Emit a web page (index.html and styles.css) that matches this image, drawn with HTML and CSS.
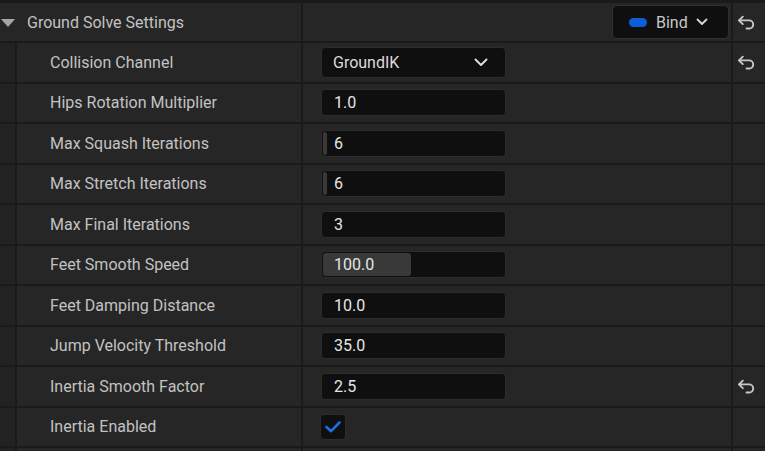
FILE: index.html
```html
<!DOCTYPE html>
<html>
<head>
<meta charset="utf-8">
<link rel="stylesheet" href="styles.css">
</head>
<body>
<div class="panel">
  <div class="row header">
    <div class="hname"><span class="tri"></span><span class="htext">Ground Solve Settings</span></div>
    <div class="value right">
      <div class="bind"><span class="pill"></span><span class="bindtxt">Bind</span>
        <svg class="chev" width="12" height="8" viewBox="0 0 12 8"><path d="M1.5 1.5 L6 6 L10.5 1.5" fill="none" stroke="#d6d6d6" stroke-width="1.8" stroke-linecap="round" stroke-linejoin="round"/></svg>
      </div>
    </div>
    <div class="reset"><svg width="18" height="15" viewBox="0 0 17 14"><path d="M5.5 1.5 L1.8 5 L5.5 8.5 M2 5 H11.5 A3.8 3.8 0 0 1 11.5 12.6 H9" fill="none" stroke="#c8c8c8" stroke-width="1.8" stroke-linecap="round" stroke-linejoin="round"/></svg></div>
  </div>

  <div class="row">
    <div class="gutter"></div>
    <div class="name">Collision Channel</div>
    <div class="value"><div class="combo"><span>GroundIK</span>
      <svg class="chev" width="14" height="9" viewBox="0 0 14 9"><path d="M1.5 1.5 L7 7 L12.5 1.5" fill="none" stroke="#e0e0e0" stroke-width="1.9" stroke-linecap="round" stroke-linejoin="round"/></svg></div></div>
    <div class="reset"><svg width="18" height="15" viewBox="0 0 17 14"><path d="M5.5 1.5 L1.8 5 L5.5 8.5 M2 5 H11.5 A3.8 3.8 0 0 1 11.5 12.6 H9" fill="none" stroke="#c8c8c8" stroke-width="1.8" stroke-linecap="round" stroke-linejoin="round"/></svg></div>
  </div>

  <div class="row">
    <div class="gutter"></div>
    <div class="name">Hips Rotation Multiplier</div>
    <div class="value"><div class="num"><span class="txt">1.0</span></div></div>
    <div class="reset"></div>
  </div>

  <div class="row">
    <div class="gutter"></div>
    <div class="name">Max Squash Iterations</div>
    <div class="value"><div class="num"><span class="fill" style="width:4px"></span><span class="txt">6</span></div></div>
    <div class="reset"></div>
  </div>

  <div class="row">
    <div class="gutter"></div>
    <div class="name">Max Stretch Iterations</div>
    <div class="value"><div class="num"><span class="fill" style="width:4px"></span><span class="txt">6</span></div></div>
    <div class="reset"></div>
  </div>

  <div class="row">
    <div class="gutter"></div>
    <div class="name">Max Final Iterations</div>
    <div class="value"><div class="num"><span class="txt">3</span></div></div>
    <div class="reset"></div>
  </div>

  <div class="row">
    <div class="gutter"></div>
    <div class="name">Feet Smooth Speed</div>
    <div class="value"><div class="num"><span class="fill" style="width:88px"></span><span class="txt">100.0</span></div></div>
    <div class="reset"></div>
  </div>

  <div class="row">
    <div class="gutter"></div>
    <div class="name">Feet Damping Distance</div>
    <div class="value"><div class="num"><span class="txt">10.0</span></div></div>
    <div class="reset"></div>
  </div>

  <div class="row">
    <div class="gutter"></div>
    <div class="name">Jump Velocity Threshold</div>
    <div class="value"><div class="num"><span class="txt">35.0</span></div></div>
    <div class="reset"></div>
  </div>

  <div class="row">
    <div class="gutter"></div>
    <div class="name">Inertia Smooth Factor</div>
    <div class="value"><div class="num"><span class="txt">2.5</span></div></div>
    <div class="reset"><svg width="18" height="15" viewBox="0 0 17 14"><path d="M5.5 1.5 L1.8 5 L5.5 8.5 M2 5 H11.5 A3.8 3.8 0 0 1 11.5 12.6 H9" fill="none" stroke="#c8c8c8" stroke-width="1.8" stroke-linecap="round" stroke-linejoin="round"/></svg></div>
  </div>

  <div class="row">
    <div class="gutter"></div>
    <div class="name">Inertia Enabled</div>
    <div class="value"><div class="check"><svg width="18" height="14" viewBox="0 0 18 14"><path d="M2.5 7 L7 11.2 L15.5 2.5" fill="none" stroke="#1c6fe3" stroke-width="2.6" stroke-linecap="round" stroke-linejoin="round"/></svg></div></div>
    <div class="reset"></div>
  </div>

  <div class="row tail">
    <div class="gutter"></div>
    <div class="name"></div>
    <div class="value"></div>
    <div class="reset"></div>
  </div>
</div>
</body>
</html>
```

FILE: styles.css
```css
html, body {
  margin: 0;
  padding: 0;
  background: #1a1a1a;
  overflow: hidden;
}
body {
  width: 765px;
  height: 451px;
  font-family: Roboto, "Liberation Sans", sans-serif;
  font-size: 16px;
}
.panel {
  padding-top: 3px;
  display: flex;
  flex-direction: column;
  gap: 2px;
}
.row {
  display: flex;
  gap: 2px;
  height: 38.5px;
}
.row.header {
  height: 38px;
}
.row.tail {
  height: 10px;
}
.hname {
  width: 301px;
  background: #262626;
  display: flex;
  align-items: center;
  color: #c2c2c2;
}
.tri {
  width: 0;
  height: 0;
  margin-left: 1px;
  border-left: 7px solid transparent;
  border-right: 7px solid transparent;
  border-top: 8px solid #a6a6a6;
  margin-top: 1px;
}
.htext {
  margin-left: 12px;
}
.gutter {
  width: 15px;
  background: #222222;
}
.name {
  width: 251px;
  padding-left: 33px;
  background: #262626;
  display: flex;
  align-items: center;
  color: #c2c2c2;
}
.value {
  width: 410px;
  padding-left: 18px;
  background: #262626;
  display: flex;
  align-items: center;
}
.value.right {
  justify-content: flex-end;
  padding-left: 0;
  padding-right: 2px;
  width: 426px;
}
.reset {
  width: 32px;
  background: #262626;
  display: flex;
  align-items: center;
  padding-left: 4px;
  box-sizing: border-box;
}
.bind {
  width: 117px;
  height: 34px;
  box-sizing: border-box;
  background: #0f0f0f;
  border: 1px solid #2f2f2f;
  border-radius: 5px;
  display: flex;
  align-items: center;
  padding-left: 16px;
  color: #c8c8c8;
}
.pill {
  width: 18px;
  height: 9px;
  border-radius: 5px;
  background: #0a5fd8;
}
.bindtxt {
  margin-left: 9px;
  margin-right: 8px;
}
.combo {
  width: 185px;
  height: 31px;
  box-sizing: border-box;
  background: #0f0f0f;
  border: 1px solid #2c2c2c;
  border-radius: 4px;
  display: flex;
  align-items: center;
  justify-content: space-between;
  padding-left: 11px;
  padding-right: 17px;
  color: #dcdcdc;
}
.num {
  position: relative;
  width: 185px;
  height: 27px;
  box-sizing: border-box;
  background: #0f0f0f;
  border: 1px solid #2c2c2c;
  border-radius: 4px;
  display: flex;
  align-items: center;
  color: #e6e6e6;
}
.fill {
  position: absolute;
  left: 1px;
  top: 1px;
  bottom: 1px;
  background: #393939;
  border-radius: 3px;
}
.txt {
  position: relative;
  padding-left: 12px;
}
.check {
  width: 26px;
  height: 26px;
  box-sizing: border-box;
  margin-left: -1px;
  background: #0f0f0f;
  border: 1px solid #2c2c2c;
  border-radius: 4px;
  display: flex;
  align-items: center;
  justify-content: center;
}
```
